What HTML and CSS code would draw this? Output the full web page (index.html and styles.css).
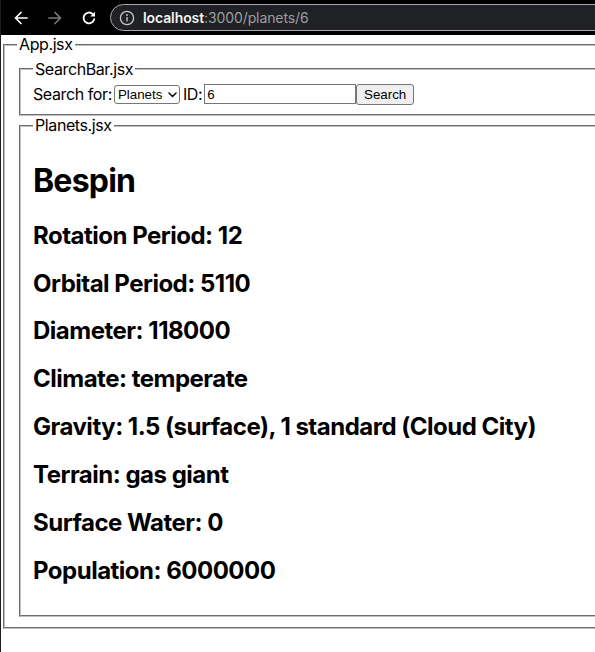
FILE: index.html
```html
<!DOCTYPE html>
<html lang="en">
<head>
<meta charset="utf-8">
<title>Planets</title>
<link rel="stylesheet" href="styles.css">
</head>
<body>
<header class="chrome">
  <span class="nav-btn">
    <svg width="16" height="16" viewBox="0 0 16 16"><path d="M14 8H2.5M8 2.5L2.5 8 8 13.5" fill="none" stroke="#ffffff" stroke-width="1.7" stroke-linecap="round" stroke-linejoin="round"/></svg>
  </span>
  <span class="nav-btn">
    <svg width="16" height="16" viewBox="0 0 16 16"><path d="M2 8h11.5M8 2.5L13.5 8 8 13.5" fill="none" stroke="#7a7a7a" stroke-width="1.7" stroke-linecap="round" stroke-linejoin="round"/></svg>
  </span>
  <span class="nav-btn">
    <svg width="16" height="16" viewBox="0 0 16 16"><path d="M13.2 9.2A5.4 5.4 0 1 1 11.6 3.9" fill="none" stroke="#ffffff" stroke-width="1.8" stroke-linecap="round"/><path d="M14 1.8V6.6H9.2Z" fill="#ffffff"/></svg>
  </span>
  <div class="omnibox">
    <svg class="info" width="16" height="16" viewBox="0 0 16 16"><circle cx="8" cy="8" r="6.6" fill="none" stroke="#c8c8c8" stroke-width="1.3"/><rect x="7.3" y="7" width="1.4" height="4.6" rx="0.5" fill="#c8c8c8"/><circle cx="8" cy="5" r="0.9" fill="#c8c8c8"/></svg>
    <span class="host">localhost</span><span class="path">:3000/planets/6</span>
  </div>
</header>
<main class="viewport">
  <fieldset class="box">
    <legend>App.jsx</legend>
    <fieldset class="box">
      <legend>SearchBar.jsx</legend>
      <form class="search">
        <label>Search for:<span class="select-wrap"><select class="ctl select"><option>Planets</option></select><svg class="chev" width="9" height="6" viewBox="0 0 9 6"><path d="M1 1l3.5 3.5L8 1" fill="none" stroke="#111" stroke-width="1.6" stroke-linecap="round" stroke-linejoin="round"/></svg></span></label>
        <label>ID:<input class="ctl input" type="text" value="6"></label><button class="ctl btn" type="button">Search</button>
      </form>
    </fieldset>
    <fieldset class="box">
      <legend>Planets.jsx</legend>
      <h1>Bespin</h1>
      <h2>Rotation Period: 12</h2>
      <h2>Orbital Period: 5110</h2>
      <h2>Diameter: 118000</h2>
      <h2>Climate: temperate</h2>
      <h2>Gravity: 1.5 (surface), 1 standard (Cloud City)</h2>
      <h2>Terrain: gas giant</h2>
      <h2>Surface Water: 0</h2>
      <h2>Population: 6000000</h2>
    </fieldset>
  </fieldset>
</main>
</body>
</html>
```
FILE: styles.css
```css
html, body {
  margin: 0;
  padding: 0;
  overflow: hidden;
  background: #ffffff;
}

body {
  font-family: Inter, "Noto Sans", sans-serif;
  font-size: 16px;
  line-height: 19px;
  letter-spacing: -0.4px;
  color: #000;
  height: 652px;
  border-left: 1px solid #1c1b22;
}

.chrome {
  height: 35px;
  background: #000000;
  display: flex;
  align-items: center;
  padding-left: 3px;
  letter-spacing: normal;
}

.nav-btn {
  width: 34px;
  height: 34px;
  display: flex;
  align-items: center;
  justify-content: center;
  flex: none;
}

.omnibox {
  margin-left: 4px;
  flex: none;
  width: 520px;
  height: 25px;
  border: 1px solid #a9a9ad;
  border-radius: 14px;
  background: #202124;
  display: flex;
  align-items: center;
  padding-left: 8px;
  font-family: Inter, "Noto Sans", sans-serif;
  font-size: 14px;
  letter-spacing: -0.1px;
}

.info {
  margin-right: 8px;
  flex: none;
}

.host {
  color: #f4f4f4;
  font-weight: 600;
}

.path {
  color: #9d9ea2;
}

.viewport {
  width: 640px;
}

.box {
  margin: 0 2px;
  padding: 0.35em 0.75em 0.625em;
  border: 2px groove #c0c0c0;
}

legend {
  padding: 0 2px;
}

.search {
  display: flex;
  align-items: center;
  height: 20px;
}

.search label {
  display: flex;
  align-items: center;
}

.ctl {
  font-family: "Liberation Sans", Arial, sans-serif;
  font-size: 13.33px;
  letter-spacing: normal;
  color: #000;
  box-sizing: border-box;
}

.select-wrap {
  position: relative;
  display: flex;
  margin: 0 3px 0 2px;
}

.select {
  -webkit-appearance: none;
  appearance: none;
  height: 19px;
  width: 66px;
  margin: 0;
  border: 1px solid #767676;
  border-radius: 3px;
  background: #fff;
  padding: 0 0 0 3px;
  line-height: 17px;
}

.chev {
  position: absolute;
  left: 54px;
  top: 7px;
  pointer-events: none;
}

.input {
  width: 152px;
  height: 20px;
  margin: 0 0 0 2px;
  border: 1px solid #767676;
  padding: 1px 2px;
}

.btn {
  width: 58px;
  height: 21px;
  border: 1px solid #767676;
  border-radius: 3px;
  background: #efefef;
  padding: 1px 6px;
}

h1 {
  font-size: 2em;
  line-height: 38px;
  letter-spacing: -0.8px;
  margin: 0.67em 0;
  font-weight: 700;
}

h2 {
  font-size: 1.5em;
  line-height: 28px;
  letter-spacing: -0.5px;
  margin: 0.83em 0;
  font-weight: 700;
}
```
